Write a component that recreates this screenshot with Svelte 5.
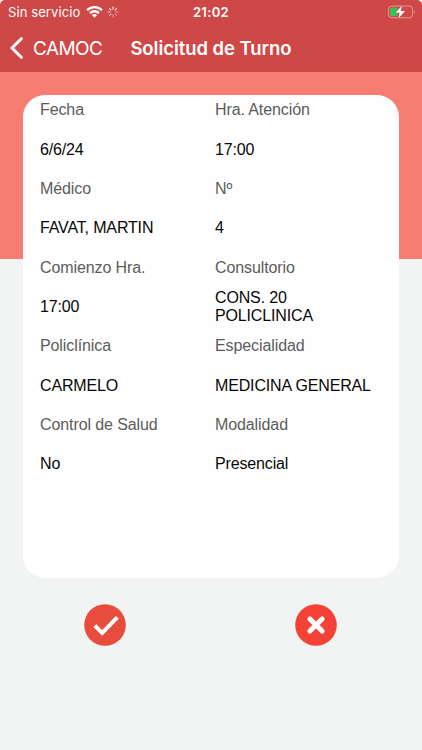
<script>
  const fields = [
    { label: "Fecha", value: "6/6/24" },
    { label: "Hra. Atención", value: "17:00" },
    { label: "Médico", value: "FAVAT, MARTIN" },
    { label: "Nº", value: "4" },
    { label: "Comienzo Hra.", value: "17:00" },
    { label: "Consultorio", value: "CONS. 20 POLICLINICA" },
    { label: "Policlínica", value: "CARMELO" },
    { label: "Especialidad", value: "MEDICINA GENERAL" },
    { label: "Control de Salud", value: "No" },
    { label: "Modalidad", value: "Presencial" }
  ];

  // spinner spokes, brightest first
  const spokes = [1, 0.9, 0.75, 0.6, 0.45, 0.4, 0.5, 0.85];
</script>

<div class="screen">
  <header>
    <div class="status-bar">
      <div class="carrier">
        <span class="carrier-name">Sin servicio</span>
        <svg class="wifi" viewBox="0 0 17 12">
          <path d="M8.5 11.8 L5.9 9.1 A3.8 3.8 0 0 1 11.1 9.1 Z" fill="white" />
          <path d="M4 7.1 A6.4 6.4 0 0 1 13 7.1 M1.1 4.2 A10.5 10.5 0 0 1 15.9 4.2" fill="none" stroke="white" stroke-width="2.4" />
        </svg>
        <svg class="spinner" viewBox="0 0 12 12">
          {#each spokes as opacity, i}
            <path d="M6 0.5 V3.6" stroke="white" stroke-width="1" stroke-opacity={opacity} transform={`rotate(${-i * 45} 6 6)`} />
          {/each}
        </svg>
      </div>
      <span class="time">21:02</span>
      <svg class="battery" viewBox="0 0 28 14">
        <rect x="0.6" y="1" width="24" height="11.8" rx="3.2" fill="none" stroke="#e59a9a" stroke-width="1" />
        <path d="M26 4.8 Q27.6 7 26 9 Z" fill="#e59a9a" />
        <rect x="2.2" y="2.6" width="7.6" height="8.6" rx="1.6" fill="#35c25a" />
        <path d="M13.9 0.5 L7.7 7.8 H11.6 L10.3 13.5 L17 5.9 H12.8 Z" fill="white" stroke="#cf4848" stroke-width="1" paint-order="stroke" />
      </svg>
    </div>
    <div class="nav-bar">
      <button type="button" class="back">
        <svg viewBox="0 0 13 22">
          <path d="M11.3 1.7 L2 11 L11.3 20.3" fill="none" stroke="white" stroke-width="3" stroke-linecap="round" stroke-linejoin="round" />
        </svg>
        <span>CAMOC</span>
      </button>
      <h1>Solicitud de Turno</h1>
    </div>
  </header>

  <main>
    <section class="card">
      <dl>
        {#each fields as field}
          <div class="field">
            <dt>{field.label}</dt>
            <dd>{field.value}</dd>
          </div>
        {/each}
      </dl>
    </section>

    <div class="actions">
      <button type="button" aria-label="Confirmar">
        <svg viewBox="0 0 42 42">
          <circle cx="21" cy="21" r="20.8" fill="#e84c3d" />
          <path d="M10.8 21.7 L18.2 29 L33.3 13.4" fill="none" stroke="white" stroke-width="4" />
        </svg>
      </button>
      <button type="button" aria-label="Cancelar">
        <svg viewBox="0 0 42 42">
          <circle cx="21" cy="21" r="20.8" fill="#f44336" />
          <path d="M14.9 14.9 L27.1 27.1 M27.1 14.9 L14.9 27.1" fill="none" stroke="white" stroke-width="5" stroke-linecap="round" />
        </svg>
      </button>
    </div>
  </main>
</div>

<style>
  :global(body) {
    background-color: white;
  }

  .screen {
    height: 750px;
    box-sizing: border-box;
    overflow: hidden;
    border-radius: 5px 5px 0 0;
    background-color: #f1f4f3;
    font-family: "Liberation Sans", Arial, sans-serif;
  }

  svg {
    display: block;
  }

  button {
    padding: 0;
    border: none;
    background: none;
    color: white;
    font: inherit;
  }

  header {
    height: 72px;
    background-color: #cf4848;
    color: white;
    font-family: Inter, sans-serif;
  }

  .status-bar {
    height: 24px;
    display: grid;
    grid-template-columns: 1fr auto 1fr;
    align-items: center;
    padding: 0 6px 0 8px;
  }

  .carrier {
    display: flex;
    align-items: center;
    font-size: 13px;
    white-space: nowrap;
  }

  .carrier-name {
    width: 78px;
    letter-spacing: 0.1px;
  }

  .wifi {
    width: 17px;
    height: 12px;
  }

  .spinner {
    width: 12px;
    height: 12px;
    margin-left: 4px;
  }

  .time {
    margin-right: 2px;
    font-size: 13px;
    font-weight: 600;
    letter-spacing: 0.35px;
  }

  .battery {
    width: 28px;
    height: 14px;
    justify-self: end;
  }

  .nav-bar {
    height: 48px;
    display: grid;
    grid-template-columns: 1fr auto 1fr;
    align-items: center;
    padding: 0 10px;
  }

  .back {
    display: flex;
    align-items: center;
    font-size: 19px;
    font-weight: 400;
  }

  .back svg {
    width: 13px;
    height: 22px;
    margin-right: 10px;
  }

  .back span {
    letter-spacing: -0.6px;
  }

  h1 {
    margin: 0;
    font-size: 18.5px;
    font-weight: 600;
    letter-spacing: -0.05px;
  }

  main {
    height: 678px;
    box-sizing: border-box;
    padding: 23px 23px 0;
    background: linear-gradient(#f77d72 187px, #f1f4f3 187px);
  }

  .card {
    height: 482.5px;
    border-radius: 22px;
    background-color: #fefefe;
  }

  dl {
    display: grid;
    grid-template-columns: 175px 175px;
    margin: 0;
    margin-top: -4.4px;
    padding-left: 17px;
    font-size: 16px;
    line-height: 18px;
  }

  main::before,
  .card::before {
    content: "";
    display: table;
  }

  .field {
    height: 78.7px;
    display: grid;
    grid-template-rows: 1fr 1fr;
    align-items: center;
  }

  dt {
    color: #5c5c5c;
    letter-spacing: -0.1px;
  }

  dd {
    max-width: 160px;
    margin: 0;
    color: #080808;
    letter-spacing: -0.15px;
  }

  .actions {
    display: flex;
    justify-content: space-between;
    padding: 26px 62px 0 61px;
  }

  .actions svg {
    width: 42px;
    height: 42px;
  }
</style>
